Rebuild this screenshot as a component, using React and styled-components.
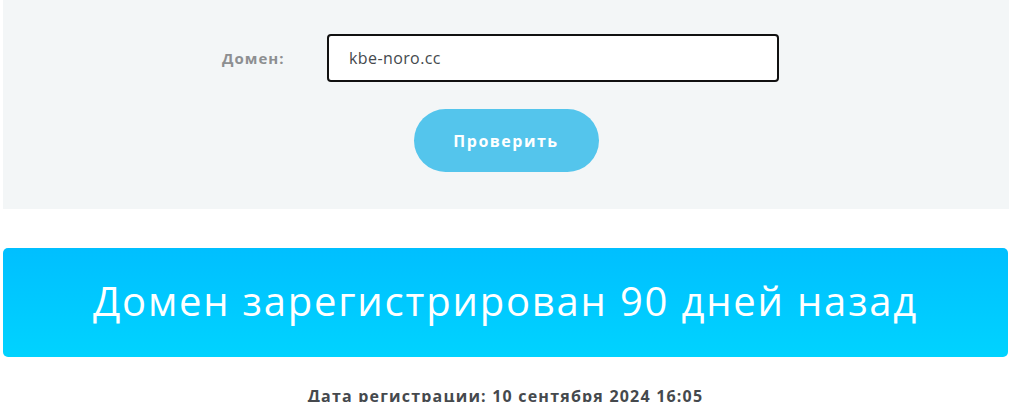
import React from 'react';
import styled, { createGlobalStyle } from 'styled-components';

const GlobalStyle = createGlobalStyle`
    html, body {
        margin: 0;
        padding: 0;
        background: #ffffff;
    }
    body {
        font-family: "Open Sans", "Noto Sans", sans-serif;
    }
    * {
        box-sizing: border-box;
    }
`;

const Page = styled.div`
    padding-left: 3px;
    width: 1009px;
    overflow: hidden;
`;

const CheckPanel = styled.form`
    background: #f3f6f7;
    height: 209px;
    padding-top: 34px;
    display: flex;
    flex-direction: column;
`;

const FieldRow = styled.div`
    display: flex;
    align-items: center;
    padding-left: 219px;
`;

const Label = styled.label`
    width: 105px;
    font-size: 15px;
    font-weight: 700;
    color: #8d8f91;
    letter-spacing: 1px;
`;

const Input = styled.input`
    width: 452px;
    height: 48px;
    border: 2px solid #111111;
    border-radius: 4px;
    background: #ffffff;
    padding: 0 20px;
    font-family: inherit;
    font-size: 16px;
    letter-spacing: 0.4px;
    color: #45494d;
    outline: none;
`;

const SubmitButton = styled.button`
    align-self: center;
    margin-top: 27px;
    width: 185px;
    height: 63px;
    border: none;
    border-radius: 32px;
    background: #54c5ec;
    color: #ffffff;
    font-family: inherit;
    font-size: 16px;
    font-weight: 700;
    letter-spacing: 1.5px;
    cursor: pointer;
`;

const Banner = styled.div`
    margin-top: 39px;
    width: 1005px;
    height: 109px;
    border-radius: 5px;
    background: linear-gradient(180deg, #00bfff 0%, #00d3ff 100%);
    display: flex;
    align-items: center;
    justify-content: center;
    color: #ffffff;
    font-size: 40px;
    font-weight: 400;
    letter-spacing: 1.8px;
    padding-bottom: 4px;
`;

const RegDate = styled.p`
    margin: 0;
    padding-top: 28px;
    width: 1005px;
    text-align: center;
    font-size: 16px;
    font-weight: 700;
    letter-spacing: 1.2px;
    color: #45494d;
`;

const App = () => {
    return (
        <Page>
            <GlobalStyle />
            <CheckPanel onSubmit={(e) => e.preventDefault()}>
                <FieldRow>
                    <Label htmlFor="domain">Домен:</Label>
                    <Input id="domain" defaultValue="kbe-noro.cc" />
                </FieldRow>
                <SubmitButton type="submit">Проверить</SubmitButton>
            </CheckPanel>
            <Banner>Домен зарегистрирован 90 дней назад</Banner>
            <RegDate>Дата регистрации: 10 сентября 2024 16:05</RegDate>
        </Page>
    );
};

export default App;
